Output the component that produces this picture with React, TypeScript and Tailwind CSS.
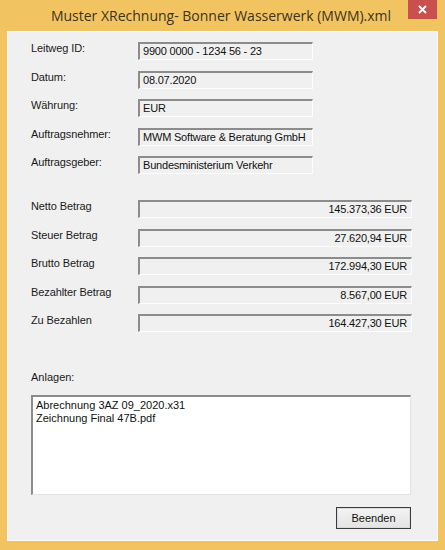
import React from "react";

const headerFields = [
  { label: "Leitweg ID:", value: "9900 0000 - 1234 56 - 23" },
  { label: "Datum:", value: "08.07.2020" },
  { label: "Währung:", value: "EUR" },
  { label: "Auftragsnehmer:", value: "MWM Software & Beratung GmbH" },
  { label: "Auftragsgeber:", value: "Bundesministerium Verkehr" },
];

const amounts = [
  { label: "Netto Betrag", value: "145.373,36 EUR" },
  { label: "Steuer Betrag", value: "27.620,94 EUR" },
  { label: "Brutto Betrag", value: "172.994,30 EUR" },
  { label: "Bezahlter Betrag", value: "8.567,00 EUR" },
  { label: "Zu Bezahlen", value: "164.427,30 EUR" },
];

const attachments = ["Abrechnung 3AZ 09_2020.x31", "Zeichnung Final 47B.pdf"];

const sunken =
  "h-[18px] bg-[#f0f0f0] border-t-2 border-l-2 border-t-[#8c8c8c] border-l-[#8c8c8c] border-r border-b border-r-[#fdfdfd] border-b-[#fdfdfd] text-[11px] leading-[14px] tracking-[-0.2px] text-[#111]";

function Row({ label, value, right }: { label: string; value: string; right?: boolean }) {
  return (
    <div className="flex items-start">
      <div className="w-[107px] text-[11px] leading-[13px] tracking-[-0.1px] text-[#1a1a1a]">{label}</div>
      {right ? (
        <div className={`${sunken} w-[274px] pr-[4px] text-right`}>{value}</div>
      ) : (
        <div className={`${sunken} w-[175px] pl-[3px]`}>{value}</div>
      )}
    </div>
  );
}

export default function App() {
  return (
    <div
      className="w-[445px] h-[550px] bg-[#f2c461] flex flex-col"
      style={{ fontFamily: '"Liberation Sans", Arial, sans-serif' }}
    >
      <div className="h-[31px] relative flex items-center justify-center">
        <span
          className="text-[14px] text-[#3d3320] pb-[1px] pr-[3px]"
          style={{ fontFamily: '"Open Sans", "Noto Sans", sans-serif' }}
        >
          Muster XRechnung- Bonner Wasserwerk (MWM).xml
        </span>
        <div className="absolute right-[8px] top-0 w-[29px] h-[19px] bg-[#c9504f] flex items-center justify-center">
          <svg width="9" height="9" viewBox="0 0 9 9">
            <path d="M1 1L8 8M8 1L1 8" stroke="#fff" strokeWidth="1.8" />
          </svg>
        </div>
      </div>

      <div className="flex-1 mx-[7px] mb-[9px] bg-[#f0f0f0] border border-[#fbfbfb] flex flex-col pl-[23px] pt-[10px]">
        <div className="flex flex-col gap-[10.5px]">
          {headerFields.map((f) => (
            <Row key={f.label} label={f.label} value={f.value} />
          ))}
        </div>

        <div className="flex flex-col gap-[10.5px] mt-[26px]">
          {amounts.map((f) => (
            <Row key={f.label} label={f.label} value={f.value} right />
          ))}
        </div>

        <div className="mt-[39px] text-[11px] leading-[13px] text-[#1a1a1a]">Anlagen:</div>

        <div className="mt-[11px] w-[380px] h-[100px] bg-white border-t-2 border-l-2 border-t-[#8c8c8c] border-l-[#8c8c8c] border-r border-b border-r-[#e2e2e2] border-b-[#e2e2e2] pl-[3px] pt-[2px]">
          {attachments.map((a) => (
            <div key={a} className="text-[11px] leading-[13px] text-[#111]">
              {a}
            </div>
          ))}
        </div>

        <div className="mt-[12px] w-[380px] flex justify-end">
          <button className="w-[75px] h-[22px] border border-[#3c3c3c] bg-gradient-to-b from-[#f4f4f4] to-[#e3e3e3] text-[11px] text-[#111] shadow-[inset_0_0_0_1px_#dadada]">
            Beenden
          </button>
        </div>
      </div>
    </div>
  );
}
